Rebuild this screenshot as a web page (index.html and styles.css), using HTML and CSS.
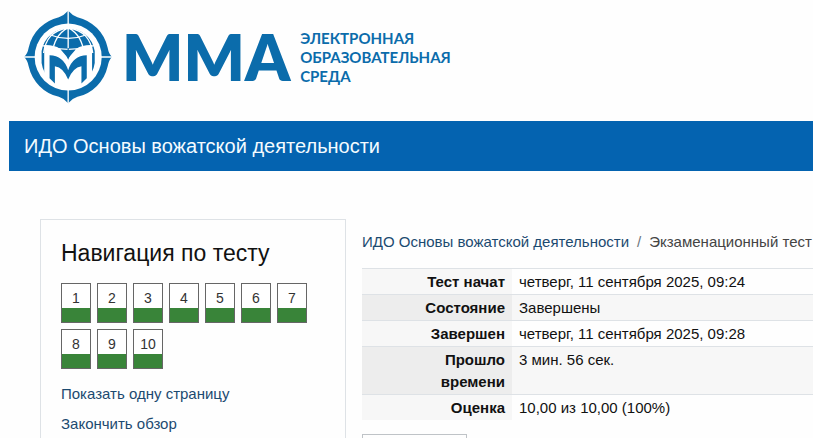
FILE: index.html
```html
<!DOCTYPE html>
<html lang="ru">
  <head>
    <meta charset="UTF-8">
    <meta name="viewport" content="width=device-width, initial-scale=1.0">
    <title>ИДО Основы вожатской деятельности</title>
    <link rel="stylesheet" href="styles.css">
  </head>
  <body>
    <header class="header">
      <a class="logo" href="#">
        <svg class="emblem" viewBox="27 33 265 278" aria-hidden="true">
          <!-- compass ring -->
          <path fill="#0b6cab" d="M160 33Q172 47 188 52A122 122 0 0 1 279 144Q282 162 292 172Q282 182 279 200A122 122 0 0 1 188 292Q172 297 160 311Q148 297 132 292A122 122 0 0 1 41 200Q38 182 27 172Q38 162 41 144A122 122 0 0 1 132 52Q148 47 160 33Z"/>
          <circle cx="160" cy="172" r="101" fill="#fff"/>
          <path stroke="#fff" stroke-width="4" d="M160 33V75M160 269V311M27 172H62M258 172H292"/>
          <!-- globe -->
          <path fill="#0b6cab" d="M80 154A81 81 0 0 1 240 154V190Q238 206 230 220V160L160 186L90 160V220Q82 206 80 190Z"/>
          <g fill="none" stroke="#fff" stroke-width="4">
            <path d="M160 83V150M160 84C130 98 115 130 113 160M160 84C190 98 205 130 207 160M160 84C112 92 92 118 86 160M160 84C208 92 228 118 234 160"/>
            <path d="M104 105Q160 127 216 105M82 138Q160 160 238 138"/>
          </g>
          <!-- letter -->
          <path fill="#fff" d="M88 136Q144 134 160 180Q176 134 232 136V232H88Z"/>
          <path fill="#0b6cab" d="M104 167Q146 168 160 212Q174 168 216 167V236L200 252V200Q174 204 160 240Q146 204 120 200V252L104 236Z"/>
          <path fill="#0b6cab" d="M138 150L160 176L182 150L162 153V145H158V153Z"/>
        </svg>
        <span class="brand">ММА</span>
        <span class="tagline">ЭЛЕКТРОННАЯ<br>ОБРАЗОВАТЕЛЬНАЯ<br>СРЕДА</span>
      </a>
    </header>
    <div class="coursebar">
      <h1 class="coursetitle">ИДО Основы вожатской деятельности</h1>
    </div>
    <div class="page">
      <aside class="block">
        <h2 class="blocktitle">Навигация по тесту</h2>
        <nav class="questions" aria-label="Навигация по тесту">
          <a class="question" href="#q1">1</a>
          <a class="question" href="#q2">2</a>
          <a class="question" href="#q3">3</a>
          <a class="question" href="#q4">4</a>
          <a class="question" href="#q5">5</a>
          <a class="question" href="#q6">6</a>
          <a class="question" href="#q7">7</a>
          <a class="question" href="#q8">8</a>
          <a class="question" href="#q9">9</a>
          <a class="question" href="#q10">10</a>
        </nav>
        <div class="blocklinks">
          <a href="#">Показать одну страницу</a>
          <a href="#">Закончить обзор</a>
        </div>
      </aside>
      <main class="content">
        <nav class="breadcrumb">
          <a href="#">ИДО Основы вожатской деятельности</a>
          <span class="divider">/</span>
          <span>Экзаменационный тест</span>
        </nav>
        <table class="summary">
          <tbody>
            <tr>
              <th scope="row">Тест начат</th>
              <td>четверг, 11 сентября 2025, 09:24</td>
            </tr>
            <tr>
              <th scope="row">Состояние</th>
              <td>Завершены</td>
            </tr>
            <tr>
              <th scope="row">Завершен</th>
              <td>четверг, 11 сентября 2025, 09:28</td>
            </tr>
            <tr>
              <th scope="row">Прошло времени</th>
              <td>3 мин. 56 сек.</td>
            </tr>
            <tr>
              <th scope="row">Оценка</th>
              <td>10,00 из 10,00 (100%)</td>
            </tr>
          </tbody>
        </table>
        <div class="info"></div>
      </main>
    </div>
  </body>
</html>
```
FILE: styles.css
```css
* {
  box-sizing: border-box;
}
body {
  margin: 0;
  font-family: "Liberation Sans", Arial, sans-serif;
  font-size: 15px;
  line-height: 22px;
  color: #111;
  background-color: #fefefe;
  overflow: hidden;
}
a {
  color: #1c4a70;
  text-decoration: none;
}
.header {
  padding: 10px 24px 17px;
}
.logo {
  display: flex;
  align-items: center;
  color: #0b6cab;
  font-family: Lato, sans-serif;
}
.emblem {
  width: 88px;
  height: 94px;
}
.brand {
  margin-left: 10px;
  font-size: 64px;
  font-weight: 800;
  line-height: 80px;
}
.tagline {
  margin-left: 10px;
  font-size: 15px;
  font-weight: 700;
  line-height: 19px;
}
.coursebar {
  margin-left: 9px;
  padding: 14px 15px;
  background-color: #0463b0;
}
.coursetitle {
  margin: 0;
  font-size: 20px;
  font-weight: 400;
  line-height: 22px;
  color: #f4fbff;
}
.page {
  display: flex;
  gap: 16px;
  margin: 48px 0 0 40px;
}
.block {
  flex: 0 0 306px;
  padding: 20px;
  border: 1px solid #dee2e6;
}
.blocktitle {
  margin: 0 0 16px;
  font-size: 23px;
  font-weight: 400;
  line-height: 27px;
}
.questions {
  display: flex;
  flex-wrap: wrap;
  gap: 6px;
}
.question {
  width: 30px;
  height: 40px;
  border: 1px solid #666;
  background: linear-gradient(#fff 24px, #398439 24px);
  font-size: 14px;
  line-height: 28px;
  text-align: center;
  color: #333;
}
.blocklinks {
  display: flex;
  flex-direction: column;
  align-items: flex-start;
  gap: 8px;
  margin-top: 14px;
}
.content {
  flex: 1;
  min-width: 0;
}
.breadcrumb {
  display: flex;
  gap: 8px;
  margin: 12px 0 15px;
  white-space: nowrap;
  color: #444;
}
.divider {
  color: #6c757d;
}
.summary {
  width: 100%;
  border-collapse: collapse;
}
.summary th,
.summary td {
  padding: 2px 7px 1px;
  border-top: 1px solid #dee2e6;
  text-align: left;
  vertical-align: top;
}
.summary th {
  width: 150px;
  padding-left: 48px;
  text-align: right;
  background-color: #f7f7f7;
}
.summary tr:nth-child(even) th {
  background-color: #ededed;
}
.summary tr:nth-child(even) td {
  background-color: #f7f7f7;
}
.info {
  width: 105px;
  height: 40px;
  margin-top: 14px;
  border: 1px solid #bfc3c7;
}
```
